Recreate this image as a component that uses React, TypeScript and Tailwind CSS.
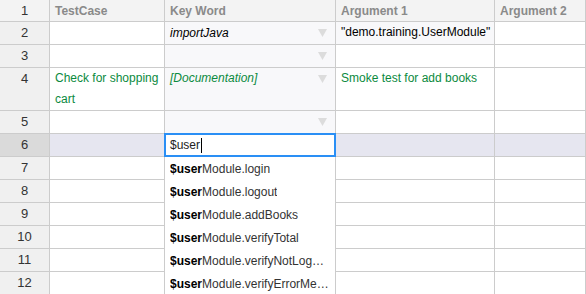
import React from "react";

const font = { fontFamily: '"Liberation Sans", Arial, sans-serif' };

const Arrow = () => (
  <svg width="9" height="8" viewBox="0 0 9 8" className="shrink-0">
    <path d="M0 0 L9 0 L4.5 8 Z" fill="#dcdcdc" />
  </svg>
);

type Row = {
  n: number;
  tc?: React.ReactNode;
  kw?: React.ReactNode;
  a1?: React.ReactNode;
  arrow?: boolean;
  tall?: boolean;
  active?: boolean;
};

const rows: Row[] = [
  { n: 2, kw: <span className="italic text-black">importJava</span>, a1: <span className="text-black">"demo.training.UserModule"</span>, arrow: true },
  { n: 3, arrow: true },
  {
    n: 4,
    tall: true,
    arrow: true,
    tc: <span className="text-[#0b8a3e]">Check for shopping cart</span>,
    kw: <span className="italic text-[#0b8a3e]">[Documentation]</span>,
    a1: <span className="text-[#0b8a3e]">Smoke test for add books</span>,
  },
  { n: 5, arrow: true },
  { n: 6, active: true },
  { n: 7 },
  { n: 8 },
  { n: 9 },
  { n: 10 },
  { n: 11 },
  { n: 12 },
];

const suggestions = ["login", "logout", "addBooks", "verifyTotal", "verifyNotLoggedIn", "verifyErrorMessage"];

export default function App() {
  return (
    <div className="relative w-[586px] h-[294px] overflow-hidden bg-white text-[12px]" style={font}>
      <div className="grid grid-cols-[49px_114px_170px_158px_90px] gap-px bg-[#cccccc] pr-px">
        <div className="h-[21px] bg-[#f3f3f3] flex items-center justify-center text-[13px] text-[#333]">1</div>
        {["TestCase", "Key Word", "Argument 1", "Argument 2"].map((h) => (
          <div key={h} className="h-[21px] bg-[#f3f3f3] flex items-center px-[5px] font-bold text-[#8a8a8a]">
            {h}
          </div>
        ))}
        {rows.map((r) => {
          const h = r.tall ? "h-[42px]" : "h-[22px]";
          const cellBg = r.active ? "bg-[#e6e6f0]" : "bg-white";
          return (
            <React.Fragment key={r.n}>
              <div
                className={`${h} ${r.active ? "bg-[#dadada]" : "bg-[#f0f0f0]"} flex ${r.tall ? "items-start pt-[1px]" : "items-center"} justify-center text-[13px] text-[#333]`}
              >
                {r.n}
              </div>
              <div className={`${h} ${cellBg} px-[5px] leading-[21px]`}>{r.tc}</div>
              <div
                className={`${h} ${r.active ? "bg-[#e6e6f0]" : r.arrow ? "bg-[#f8f8fa]" : "bg-white"} pl-[5px] pr-[8px] flex ${r.tall ? "items-start" : "items-center"} justify-between leading-[21px]`}
              >
                <span>{r.kw}</span>
                {r.arrow && (
                  <span className={r.tall ? "pt-[7px]" : ""}>
                    <Arrow />
                  </span>
                )}
              </div>
              <div className={`${h} ${r.n === 2 ? "bg-[#f8f8fa]" : cellBg} px-[5px] leading-[21px] whitespace-nowrap`}>{r.a1}</div>
              <div className={`${h} ${cellBg}`}></div>
            </React.Fragment>
          );
        })}
      </div>

      {/* inline editor */}
      <div className="absolute left-[164px] top-[133px] w-[172px] h-[24px] border-2 border-[#2a8ff5] bg-white flex items-center pl-[4px] text-[#222]">
        <span>$user</span>
        <span className="w-px h-[15px] bg-black ml-px"></span>
      </div>

      {/* autocomplete list */}
      <div className="absolute left-[164px] top-[157px] w-[172px] bottom-0 bg-white border-x border-[#cccccc]">
        {suggestions.map((s) => (
          <div key={s} className="h-[23px] flex items-center pl-[5px] pr-[6px] text-[#333]">
            <span className="truncate">
              <b className="text-black">$user</b>Module.{s}
            </span>
          </div>
        ))}
      </div>
    </div>
  );
}
